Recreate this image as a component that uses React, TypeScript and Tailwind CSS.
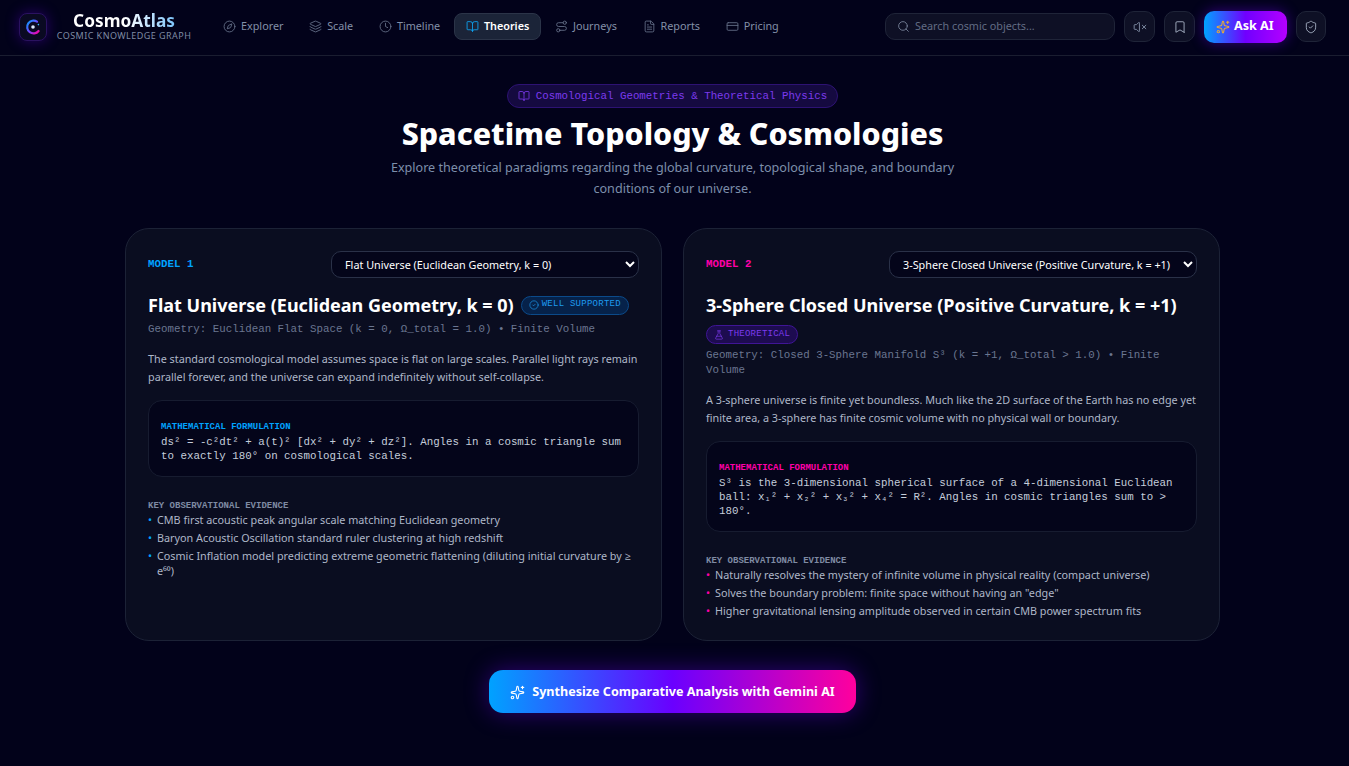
import {
  Bookmark,
  BookOpen,
  CircleCheck,
  Clock,
  Compass,
  CreditCard,
  FileText,
  FlaskConical,
  Layers,
  Route,
  Search,
  ShieldCheck,
  Sparkles,
  VolumeX,
} from "lucide-react";

const sans = "font-['Noto_Sans','Open_Sans',sans-serif]";
const mono = "font-['Liberation_Mono',monospace]";

const nav = [
  { label: "Explorer", icon: Compass },
  { label: "Scale", icon: Layers },
  { label: "Timeline", icon: Clock },
  { label: "Theories", icon: BookOpen, active: true },
  { label: "Journeys", icon: Route },
  { label: "Reports", icon: FileText },
  { label: "Pricing", icon: CreditCard },
];

function Logo() {
  return (
    <div className="w-7 h-7 rounded-lg bg-[#0a0a22] border border-[#2a1260] shadow-[0_0_14px_rgba(112,0,255,0.35)] flex items-center justify-center">
      <svg width="18" height="18" viewBox="0 0 18 18" fill="none">
        <defs>
          <linearGradient id="logo-c" x1="0" y1="0" x2="1" y2="1">
            <stop offset="0%" stopColor="#00a2ff" />
            <stop offset="55%" stopColor="#7a3cff" />
            <stop offset="100%" stopColor="#ff009d" />
          </linearGradient>
        </defs>
        <path d="M13 3.6A6.4 6.4 0 1 0 14.6 13" stroke="url(#logo-c)" strokeWidth="2.2" strokeLinecap="round" />
        <circle cx="9" cy="9" r="1.8" fill="#dbeafe" />
        <circle cx="14.4" cy="6.6" r="0.8" fill="#38bdf8" />
      </svg>
    </div>
  );
}

function Header() {
  return (
    <header className="h-14 border-b border-[#1a1d30] flex items-center pl-[19px] pr-[23px] pb-[2px]">
      <Logo />
      <div className="ml-[10px] w-[134px] flex flex-col items-center">
        <span className="text-[17.3px] leading-[18px] font-bold bg-gradient-to-r from-white via-white to-[#7cc4fa] bg-clip-text text-transparent">
          CosmoAtlas
        </span>
        <span className="text-[9px] leading-[11px] tracking-[0.45px] text-[#7f8ba3] whitespace-nowrap">
          COSMIC KNOWLEDGE GRAPH
        </span>
      </div>
      <nav className="ml-[20px] flex items-center gap-[1.7px]">
        {nav.map((n) => {
          const Icon = n.icon;
          return (
            <div
              key={n.label}
              className={`h-[27px] px-[11px] flex items-center gap-[5px] rounded-lg border text-[10.8px] ${
                n.active
                  ? "bg-[#1b2438] border-[#2b3448] text-white font-semibold"
                  : "border-transparent text-[#8290a8]"
              }`}
            >
              <Icon size={13} strokeWidth={1.6} className={n.active ? "text-[#0ea5f5]" : "text-[#66728a]"} />
              {n.label}
            </div>
          );
        })}
      </nav>
      <div className="ml-auto flex items-center">
        <div className="w-[230px] h-[27px] rounded-[10px] bg-[#0e1025] border border-[#1f2438] flex items-center pl-[11px] gap-[5px] text-[10.8px] text-[#626c84]">
          <Search size={13} strokeWidth={1.6} className="text-[#7a859c]" />
          Search cosmic objects...
        </div>
        <div className="ml-[9px] w-[31px] h-[31px] rounded-[10px] bg-[#0e1025] border border-[#1f2438] flex items-center justify-center text-[#8290a8]">
          <VolumeX size={14} strokeWidth={1.6} />
        </div>
        <div className="ml-[9px] w-[31px] h-[31px] rounded-[10px] bg-[#0e1025] border border-[#1f2438] flex items-center justify-center text-[#a3adc0]">
          <Bookmark size={14} strokeWidth={1.6} />
        </div>
        <div className="ml-[9px] w-[83px] h-8 rounded-[10px] bg-[linear-gradient(to_right,#00a2ff,#7000ff,#b400ff)] shadow-[0_0_14px_rgba(112,0,255,0.45)] flex items-center pl-[12px] gap-[4px] text-[12.6px] font-bold text-white">
          <Sparkles size={14} strokeWidth={1.8} className="text-[#e8a93a]" />
          Ask AI
        </div>
        <div className="ml-[9px] w-[30px] h-[31px] rounded-[10px] bg-[#0e1025] border border-[#1f2438] flex items-center justify-center text-[#a3adc0]">
          <ShieldCheck size={14} strokeWidth={1.6} />
        </div>
      </div>
    </header>
  );
}

type Model = {
  tag: string;
  tagClass: string;
  bulletClass: string;
  title: string;
  badge: "supported" | "theoretical";
  geometry: string;
  body: string;
  formula: string;
  evidence: React.ReactNode[];
};

const models: Model[] = [
  {
    tag: "MODEL 1",
    tagClass: "text-[#00a2ff]",
    bulletClass: "text-[#00a2ff]",
    title: "Flat Universe (Euclidean Geometry, k = 0)",
    badge: "supported",
    geometry: "Geometry: Euclidean Flat Space (k = 0, Ω_total = 1.0) • Finite Volume",
    body: "The standard cosmological model assumes space is flat on large scales. Parallel light rays remain parallel forever, and the universe can expand indefinitely without self-collapse.",
    formula: "ds² = -c²dt² + a(t)² [dx² + dy² + dz²]. Angles in a cosmic triangle sum to exactly 180° on cosmological scales.",
    evidence: [
      "CMB first acoustic peak angular scale matching Euclidean geometry",
      "Baryon Acoustic Oscillation standard ruler clustering at high redshift",
      "Cosmic Inflation model predicting extreme geometric flattening (diluting initial curvature by ≥ e⁶⁰)",
    ],
  },
  {
    tag: "MODEL 2",
    tagClass: "text-[#ff00a8]",
    bulletClass: "text-[#ff00a8]",
    title: "3-Sphere Closed Universe (Positive Curvature, k = +1)",
    badge: "theoretical",
    geometry: "Geometry: Closed 3-Sphere Manifold S³ (k = +1, Ω_total > 1.0) • Finite Volume",
    body: "A 3-sphere universe is finite yet boundless. Much like the 2D surface of the Earth has no edge yet finite area, a 3-sphere has finite cosmic volume with no physical wall or boundary.",
    formula: "S³ is the 3-dimensional spherical surface of a 4-dimensional Euclidean ball: x₁² + x₂² + x₃² + x₄² = R². Angles in cosmic triangles sum to > 180°.",
    evidence: [
      "Naturally resolves the mystery of infinite volume in physical reality (compact universe)",
      'Solves the boundary problem: finite space without having an "edge"',
      "Higher gravitational lensing amplitude observed in certain CMB power spectrum fits",
    ],
  },
];

function Badge({ kind }: { kind: Model["badge"] }) {
  if (kind === "supported") {
    return (
      <span className={`${mono} inline-flex items-center gap-[3px] h-[19px] px-[7px] rounded-full border border-[#0b4a8a] bg-[#06224a] text-[#1e9bf0] text-[9px] tracking-[0.25px] whitespace-nowrap`}>
        <CircleCheck size={10} strokeWidth={1.6} />
        WELL SUPPORTED
      </span>
    );
  }
  return (
    <span className={`${mono} inline-flex items-center gap-[4px] h-[19px] px-[7px] mb-[1px] rounded-full border border-[#3f1596] bg-[#1d0c50] text-[#7c3aed] text-[9px] tracking-[0.25px] whitespace-nowrap`}>
      <FlaskConical size={10} strokeWidth={1.6} />
      THEORETICAL
    </span>
  );
}

function ModelCard({ model }: { model: Model }) {
  return (
    <section className="rounded-3xl border border-[#1c2236] bg-[#0a0d20] px-[22px] pt-[22px] h-[413px]">
      <div className="flex items-center justify-between">
        <span className={`${mono} ${model.tagClass} text-[10.8px] font-bold`}>{model.tag}</span>
        <select
          defaultValue={model.title}
          className="w-[308px] h-[27px] rounded-[10px] border border-[#2a3148] bg-[#04051a] pl-[9px] pr-[3px] text-[10.8px] text-white [color-scheme:dark] outline-none"
        >
          <option>{model.title}</option>
        </select>
      </div>
      <div className="mt-[13px] flex flex-wrap items-center gap-x-[7px] gap-y-[6px]">
        <h2 className="text-[18px] leading-[28px] font-bold text-white">{model.title}</h2>
        <Badge kind={model.badge} />
      </div>
      <p className={`${mono} mt-[3px] text-[#6b7690] text-[10.8px] leading-[14.5px]`}>{model.geometry}</p>
      <p className="mt-[13.5px] text-[#aeb7c8] text-[10.8px] leading-[18px]">{model.body}</p>
      <div className="mt-[14px] rounded-[14px] border border-[#171c30] bg-[#04051a] px-[12px] pt-[21px] pb-[12px]">
        <div className={`${mono} ${model.tagClass} text-[9px] leading-[11px] font-bold`}>MATHEMATICAL FORMULATION</div>
        <p className={`${mono} mt-[2px] text-[#c5cdda] text-[10.8px] leading-[14.4px]`}>{model.formula}</p>
      </div>
      <div className={`${mono} mt-[24px] text-[#7f8ba3] text-[9px] leading-[11px] font-bold`}>KEY OBSERVATIONAL EVIDENCE</div>
      <ul className="-mt-[3px]">
        {model.evidence.map((e, i) => (
          <li key={i} className="flex gap-[6px] text-[#aeb7c8] text-[10.8px] leading-[15px] pt-[3px]">
            <span className={`${model.bulletClass} shrink-0 w-[3px]`}>•</span>
            <span>{e}</span>
          </li>
        ))}
      </ul>
    </section>
  );
}

export default function App() {
  return (
    <div className={`${sans} min-h-[766px] bg-[#02021a] overflow-hidden`}>
      <Header />
      <main className="flex flex-col items-center pr-1">
        <div className={`${mono} mt-[28px] h-6 px-[10px] rounded-full border border-[#2d1273] bg-[#150a40] flex items-center gap-[6px] text-[#7c3aed] text-[10.8px]`}>
          <BookOpen size={12} strokeWidth={1.6} />
          Cosmological Geometries &amp; Theoretical Physics
        </div>
        <h1 className="mt-[6px] text-[30.4px] leading-[40px] font-extrabold text-white">Spacetime Topology &amp; Cosmologies</h1>
        <p className="mt-[3px] w-[576px] text-center text-[#7d8fab] text-[12.6px] leading-[21px]">
          Explore theoretical paradigms regarding the global curvature, topological shape, and boundary conditions of our universe.
        </p>
        <div className="mt-[29px] w-[1095px] grid grid-cols-2 gap-[21px]">
          {models.map((m) => (
            <ModelCard key={m.tag} model={m} />
          ))}
        </div>
        <div className="mt-[29px] w-[367px] h-[43px] pt-[1px] rounded-[14px] bg-[linear-gradient(to_right,#00a2ff,#6a00ff,#ff009d)] shadow-[0_0_24px_rgba(112,0,255,0.4)] flex items-center justify-center gap-[7px] text-white text-[12.6px] font-bold">
          <Sparkles size={15} strokeWidth={1.8} />
          Synthesize Comparative Analysis with Gemini AI
        </div>
      </main>
    </div>
  );
}
